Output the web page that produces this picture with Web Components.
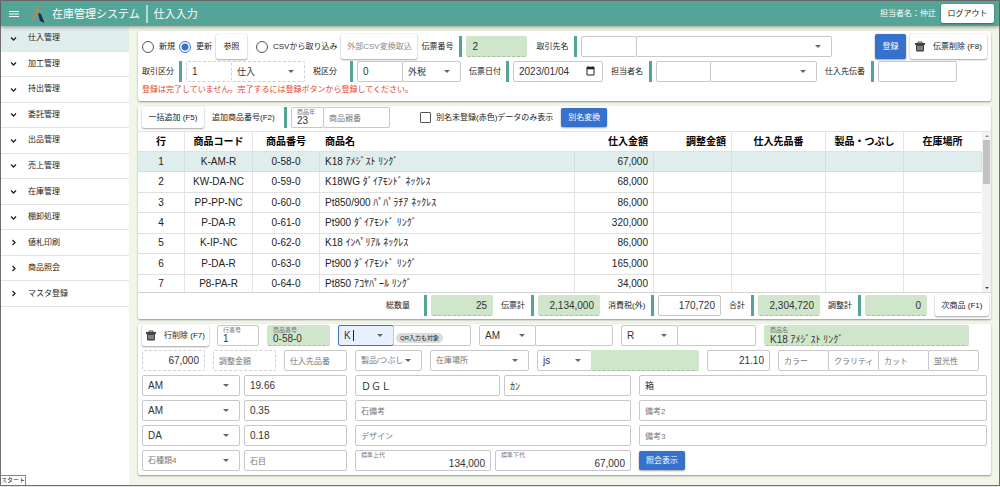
<!DOCTYPE html>
<html lang="ja">
<head>
<meta charset="utf-8">
<title>在庫管理システム | 仕入入力</title>
<style>
  body { margin: 0; background: #e6e6e6; font-family: "Liberation Sans", "Noto Sans CJK JP", sans-serif; font-size: 8px; line-height: 12px; color: #222; }
</style>
</head>
<body>
<stock-app></stock-app>
<script>
const define = (name, render) => customElements.define(name, class extends HTMLElement {
  connectedCallback() {
    if (this.shadowRoot) return;
    this.attachShadow({ mode: 'open' }).innerHTML = render(this);
  }
});
const attr = (el, n) => el.getAttribute(n) || '';

/* Button: plain, primary or muted; an icon may be passed in the slot */
define('ui-button', el => `
<style>
  :host { display: block; flex: none; width: var(--w); }
  button { box-sizing: border-box; width: 100%; height: var(--h, 21px); padding: 0; border: 0; border-radius: 2px; background: #fff; color: #222;
    font: inherit; white-space: nowrap; display: flex; align-items: center; justify-content: center; gap: 8px;
    box-shadow: 0 1px 2px rgba(0,0,0,.35), 0 0 1px rgba(0,0,0,.2); }
  :host([primary]) button { background: #3672cb; color: #fff; }
  :host([muted]) button { color: #888; }
</style>
<button type="button"><slot></slot></button>`);

define('trash-icon', () => `
<style>:host { display: block; width: 10px; height: 11px; } svg { display: block; }</style>
<svg width="10" height="11" viewBox="0 0 10 11" aria-hidden="true"><path d="M3 2V1h4v1" fill="none" stroke="#444"/><path d="M0 2h10v2H0z" fill="#444"/><path d="M1 4h8v5.500q0 1-1 1H2q-1 0-1-1z" fill="#444"/><path d="M3 5v4M5 5v4M7 5v4" stroke="#ddd" stroke-width=".8"/></svg>`);

/* Styles shared by text and drop-down fields */
const fieldCss = `
  :host { display: flex; align-items: center; min-width: 0; flex: 0 1 auto; }
  :host([grow]) { flex: 1 1 0; }
  label { white-space: nowrap; }
  :host([mode="bar"]) label { margin-right: 4px; min-width: var(--lw, 0); }
  .bar { flex: none; width: 3px; height: 21px; background: #54a498; margin-right: 4px; }
  .box { position: relative; box-sizing: border-box; display: flex; flex: 1 1 auto; width: var(--w, 60px); min-width: 0; height: 21px;
    border: 1px solid #c8c8c8; border-radius: 2px; background: #fff; }
  :host([dashed]) .box { border: 1px dashed #d0d0d0; }
  :host([filled]) .box { background: #cfe6cb; border-color: #cfe6cb #cfe6cb #a5bfa2; border-bottom-style: dashed; }
  :host([focused]) .box { background: #e6f1fd; border-color: #3672cb; }
  input, select { box-sizing: border-box; width: 100%; min-width: 0; height: 19px; margin: 0; padding: 0 5px; border: 0; outline: 0; background: none;
    font: inherit; font-size: var(--fs, 10px); color: #333; appearance: none; border-radius: 0; }
  input::placeholder { color: #777; font-size: 8px; opacity: 1; }
  :host([num]) input { text-align: right; }
  :host([mode="float"]) label { position: absolute; left: 5px; top: 0; font-size: 6px; line-height: 8px; color: #777; }
  :host([mode="float"]) input { padding-top: 6px; }
  .arrow { position: absolute; right: 10px; top: 8px; border: solid transparent; border-width: 3px 3px 0; border-top-color: #666; pointer-events: none; }
  .cal { position: absolute; right: 7px; top: 4px; }
  .caret { position: absolute; left: 14px; top: 4px; width: 1px; height: 11px; background: #222; }
  select.short { color: #777; }`;

const frame = (el, control, extra = '') => {
  const label = attr(el, 'label'), mode = attr(el, 'mode');
  const tag = `<label for="c">${label}</label>`;
  return `<style>${fieldCss}</style>
    ${mode === 'bar' ? tag + '<span class="bar"></span>' : ''}
    <div class="box">${mode === 'float' ? tag : ''}${control}${extra}</div>`;
};

define('text-field', el => {
  const mode = attr(el, 'mode'), label = attr(el, 'label');
  return frame(el, `<input id="c" type="text" value="${attr(el, 'value')}" ${!mode && label ? `placeholder="${label}"` : ''} ${mode ? '' : `aria-label="${label || attr(el, 'name')}"`} ${el.hasAttribute('filled') ? 'readonly' : ''}>`,
    (el.hasAttribute('date') ? '<svg class="cal" width="9" height="10" viewBox="0 0 9 10" aria-hidden="true"><path d="M1 2h7v7H1z" fill="none" stroke="#222"/><path d="M1 1h7v2H1zM2 0v2M7 0v2" fill="#222" stroke="#222" stroke-width=".6"/></svg>' : '') +
    (el.hasAttribute('combo') ? '<span class="caret"></span><span class="arrow"></span>' : ''));
});

define('pick-field', el => {
  const v = attr(el, 'value'), label = attr(el, 'label');
  return frame(el, `<select id="c" class="${v ? '' : 'short'}" aria-label="${label || attr(el, 'name')}"><option>${v || label}</option></select>`, '<span class="arrow"></span>');
});

/* Radio button or tick box with its label */
define('choice-item', el => {
  const type = attr(el, 'type');
  return `<style>
    :host { display: block; flex: none; }
    label { display: flex; align-items: center; gap: 5px; white-space: nowrap; }
    input { appearance: none; box-sizing: border-box; width: 11px; height: 11px; margin: 0; border: 1px solid #555; background: #fff; border-radius: 1px; }
    input[type=radio] { width: 12px; height: 12px; border-radius: 50%; }
    input[type=radio]:checked { border-color: #3672cb; background: radial-gradient(#3672cb 0 3px, #fff 4px); }
  </style><label><input type="${type}" ${el.hasAttribute('checked') ? 'checked' : ''}><slot></slot></label>`;
});

define('panel-card', () => `
<style>:host { display: block; background: #fff; border-radius: 2px; box-shadow: 0 1px 2px rgba(0,0,0,.4); }</style><slot></slot>`);

define('app-header', () => `
<style>
  :host { display: flex; align-items: center; box-sizing: border-box; height: 25px; padding: 0 5px 0 8px; background: #54a498; color: #fff;
    box-shadow: 0 1px 4px rgba(0,0,0,.4); position: relative; z-index: 1; }
  .menu { border: 0; background: none; padding: 0; width: 10px; height: 10px; display: flex; }
  .logo { margin: 0 7px 0 12px; }
  h1, h2 { margin: 0; font-size: 11px; line-height: 18px; font-weight: 400; white-space: nowrap; }
  h1 { padding-right: 6px; border-right: 2px solid #b5dad4; }
  h2 { padding-left: 6px; }
  .user { margin-left: auto; margin-right: 5px; }
</style>
<button class="menu" type="button" aria-label="メニュー"><svg width="10" height="10" viewBox="0 0 10 10"><path d="M0 2.500h10M0 5h10M0 7.500h10" stroke="#fff"/></svg></button>
<svg class="logo" width="14" height="18" viewBox="0 0 14 18" aria-hidden="true"><path d="M8 0v6L4 13l-4 3z" fill="#b98a56"/><path d="M7 8l3 1 3.500 9L9 16z" fill="#1d2c4d"/></svg>
<h1>在庫管理システム</h1><h2>仕入入力</h2>
<span class="user">担当者名：仲辻</span>
<ui-button style="--w:53px;--h:19px">ログアウト</ui-button>`);

define('side-nav', () => `
<style>
  :host { display: block; width: 128px; flex: none; background: #fff; }
  ul { list-style: none; margin: 0; padding: 0; height: 281px; display: grid; grid-auto-rows: 1fr; }
  li { border-bottom: 1px solid #e4e4e4; }
  li.on { background: #dfeeed; }
  a { display: flex; align-items: center; height: 100%; padding-left: 9px; gap: 11px; color: #222; text-decoration: none; }
</style>
<nav><ul>${['仕入管理', '加工管理', '持出管理', '委託管理', '出品管理', '売上管理', '在庫管理', '棚卸処理', '値札印刷', '商品照会', 'マスタ登録'].map((t, i) =>
  `<li class="${i ? '' : 'on'}"><a href="#"><svg width="7" height="7" viewBox="0 0 7 7" aria-hidden="true"><path d="${i < 8 ? 'M1 2.500L3.500 5 6 2.500' : 'M2.500 1L5 3.500 2.500 6'}" fill="none" stroke="#222" stroke-width="1.300"/></svg>${t}</a></li>`).join('')}</ul></nav>`);

const rows = [
  ['K-AM-R', '0-58-0', 'K18 ｱﾒｼﾞｽﾄ ﾘﾝｸﾞ', '67,000'],
  ['KW-DA-NC', '0-59-0', 'K18WG ﾀﾞｲｱﾓﾝﾄﾞ ﾈｯｸﾚｽ', '68,000'],
  ['PP-PP-NC', '0-60-0', 'Pt850/900 ﾊﾟﾊﾟﾗﾁｱ ﾈｯｸﾚｽ', '86,000'],
  ['P-DA-R', '0-61-0', 'Pt900 ﾀﾞｲｱﾓﾝﾄﾞ ﾘﾝｸﾞ', '320,000'],
  ['K-IP-NC', '0-62-0', 'K18 ｲﾝﾍﾟﾘｱﾙ ﾈｯｸﾚｽ', '86,000'],
  ['P-DA-R', '0-63-0', 'Pt900 ﾀﾞｲｱﾓﾝﾄﾞ ﾘﾝｸﾞ', '165,000'],
  ['P8-PA-R', '0-64-0', 'Pt850 ｱｺﾔﾊﾟｰﾙ ﾘﾝｸﾞ', '34,000']
];
define('item-table', () => `
<style>
  :host { display: flex; box-sizing: border-box; height: 162px; overflow: hidden; border-top: 1px solid #e4e4e4; border-bottom: 1px solid #d4d4d4; }
  table { flex: 1; min-width: 0; width: 100%; height: 163px; table-layout: fixed; border-collapse: separate; border-spacing: 0; font-size: 10px; line-height: 14px; }
  th, td { padding: 0 5px; text-align: center; white-space: nowrap; border-bottom: 1px solid #e0e0e0; border-right: 1px solid #e4e4e4; }
  th:nth-child(n+3):nth-child(-n+5), th:last-child, td:last-child { border-right-color: transparent; }
  th { height: 20px; box-sizing: border-box; color: #000; }
  .l { text-align: left; } .r { text-align: right; }
  tr.on td { background: #dfeeed; border-color: #cfe0de; }
  .scroll { width: 9px; flex: none; background: #f2f2f2; display: flex; flex-direction: column; align-items: center; padding: 3px 0; box-sizing: border-box; }
  .scroll i { border: solid transparent; border-width: 0 2px 2px; border-bottom-color: #888; }
  .scroll i:last-child { border-width: 2px 2px 0; border-top-color: #444; }
  .scroll b { width: 7px; height: 44px; background: #c1c1c1; margin: 3px 0 auto; }
</style>
<table>
  <colgroup><col style="width:47px"><col style="width:68px"><col style="width:67px"><col><col style="width:79px"><col style="width:78px"><col style="width:94px"><col style="width:78px"><col style="width:78px"></colgroup>
  <thead><tr><th>行</th><th>商品コード</th><th>商品番号</th><th class="l">商品名</th><th class="r">仕入金額</th><th class="r">調整金額</th><th>仕入先品番</th><th>製品・つぶし</th><th>在庫場所</th></tr></thead>
  <tbody>${rows.map((r, i) => `<tr class="${i ? '' : 'on'}"><td>${i + 1}</td><td>${r[0]}</td><td>${r[1]}</td><td class="l">${r[2]}</td><td class="r">${r[3]}</td><td></td><td></td><td></td><td></td></tr>`).join('')}</tbody>
</table>
<div class="scroll"><i></i><b></b><i></i></div>`);

/* Year and parent number of the item to add, under one barred heading */
define('item-number', () => `
<style>
  :host { display: flex; align-items: center; }
  .name { white-space: nowrap; width: 68px; margin-right: 4px; }
  .bar { width: 3px; height: 21px; background: #54a498; margin-right: 4px; }
  text-field + text-field { margin-left: -1px; }
</style>
<span class="name">追加商品番号(F2)</span><span class="bar"></span>
<text-field mode="float" label="商品年" value="23" style="--w:33px"></text-field><text-field label="商品親番" style="--w:67px"></text-field>`);

define('stock-app', () => `
<style>
  :host { display: flex; flex-direction: column; box-sizing: border-box; min-height: calc(100vh - 1px); border: 1px solid #707070; position: relative; background: #fff; }
  .body { display: flex; flex: 1; }
  main { flex: 1; min-width: 0; box-sizing: border-box; padding: 5px 8px 10px 9px; background: #f0f6e8; display: flex; flex-direction: column; gap: 5px; }
  .row, .join { display: flex; align-items: center; min-width: 0; }
  .row { gap: 8px; }
  .join > * + * { margin-left: -1px; }
  .entry { padding: 3px 4px 5px; }
  .entry .row:first-child { height: 25px; gap: 4px; }
  .entry .row + .row { margin-top: 2px; }
  .tools { padding: 1px 4px 3px; }
  .tools choice-item { margin-left: 22px; }
  .sum { justify-content: flex-end; padding: 2px 2px 3px; }
  .end { margin-left: auto; }
  .gap { margin-left: 5px; }
  .msg { margin: 2px 0 0; color: #e0452f; }
  .detail { padding: 1px 4px 4px; display: grid; gap: 4px; }
  .trio { display: grid; grid-template-columns: 205fr 276fr 348fr; gap: 8px; }
  .trio > div { display: flex; gap: 4px; min-width: 0; align-items: center; }
  .trio > .pair { display: grid; grid-template-columns: 98fr 103fr; }
  .chipbox { position: relative; display: flex; }
  .chip { position: absolute; left: 3px; top: 8px; height: 10px; line-height: 10px; padding: 0 4px; border-radius: 5px; background: #dcdcdc; font-size: 6px; white-space: nowrap; }
  .start { position: absolute; left: 0; bottom: 0; height: 9px; line-height: 9px; border: solid #888; border-width: 1px 1px 0 0; background: #fff; font-size: 6px; }
</style>
<app-header></app-header>
<div class="body">
<side-nav></side-nav>
<main>
  <panel-card><div class="entry">
    <div class="row">
      <choice-item type="radio">新規</choice-item>
      <choice-item type="radio" checked>更新</choice-item>
      <ui-button style="--w:31px;--h:25px">参照</ui-button>
      <choice-item class="gap" type="radio">CSVから取り込み</choice-item>
      <ui-button muted style="--w:76px;--h:25px">外部CSV変換取込</ui-button>
      <text-field mode="bar" label="伝票番号" value="2" filled style="--w:61px;--lw:34px"></text-field>
      <div class="join gap"><text-field mode="bar" label="取引先名" style="--w:56px;--lw:34px"></text-field><pick-field name="取引先名" value=" " style="--w:196px"></pick-field></div>
      <ui-button class="end" primary style="--w:31px;--h:25px">登録</ui-button>
      <ui-button style="--w:77px;--h:25px"><trash-icon></trash-icon>伝票削除 (F8)</ui-button>
    </div>
    <div class="row">
      <div class="join"><text-field mode="bar" label="取引区分" value="1" dashed style="--w:46px;--lw:33px"></text-field><pick-field name="取引区分名" value="仕入" dashed style="--w:74px;--fs:9px"></pick-field></div>
      <div class="join"><text-field mode="bar" label="税区分" value="0" style="--w:46px;--lw:33px"></text-field><pick-field name="税区分名" value="外税" style="--w:59px;--fs:9px"></pick-field></div>
      <text-field mode="bar" label="伝票日付" value="2023/01/04" date style="--w:90px;--lw:33px"></text-field>
      <div class="join"><text-field mode="bar" label="担当者名" style="--w:55px;--lw:34px"></text-field><pick-field name="担当者名" value=" " style="--w:107px"></pick-field></div>
      <text-field mode="bar" label="仕入先伝番" style="--w:79px;--lw:42px"></text-field>
    </div>
    <p class="msg">登録は完了していません。完了するには登録ボタンから登録してください。</p>
  </div></panel-card>

  <panel-card>
    <div class="row tools">
      <ui-button style="--w:62px">一括追加 (F5)</ui-button>
      <item-number></item-number>
      <choice-item type="checkbox">別名未登録(赤色)データのみ表示</choice-item>
      <ui-button primary style="--w:46px;--h:19px">別名変換</ui-button>
    </div>
    <item-table></item-table>
    <div class="row sum">
      <text-field mode="bar" label="総数量" value="25" filled num style="--w:62px;--lw:34px"></text-field>
      <text-field mode="bar" label="伝票計" value="2,134,000" filled num style="--w:62px;--lw:26px"></text-field>
      <text-field mode="bar" label="消費税(外)" value="170,720" num style="--w:63px;--lw:39px"></text-field>
      <text-field mode="bar" label="合計" value="2,304,720" filled num style="--w:62px;--lw:18px"></text-field>
      <text-field mode="bar" label="調整計" value="0" filled num style="--w:62px;--lw:26px"></text-field>
      <ui-button style="--w:54px">次商品 (F1)</ui-button>
    </div>
  </panel-card>

  <panel-card><div class="detail">
    <div class="row">
      <ui-button style="--w:67px"><trash-icon></trash-icon>行削除 (F7)</ui-button>
      <text-field mode="float" label="行番号" value="1" style="--w:42px"></text-field>
      <text-field mode="float" label="商品番号" value="0-58-0" filled style="--w:63px"></text-field>
      <div class="join"><text-field name="地金" value="K" combo focused style="--w:56px"></text-field><div class="chipbox"><text-field name="QR入力" style="--w:78px"></text-field><span class="chip">QR入力も対象</span></div></div>
      <div class="join"><pick-field name="石" value="AM" style="--w:57px"></pick-field><text-field name="石名" style="--w:78px"></text-field></div>
      <div class="join"><pick-field name="品種" value="R" style="--w:57px"></pick-field><text-field name="品種名" style="--w:79px"></text-field></div>
      <text-field mode="float" label="商品名" value="K18 ｱﾒｼﾞｽﾄ ﾘﾝｸﾞ" filled style="--w:205px"></text-field>
    </div>
    <div class="row">
      <text-field name="仕入金額" value="67,000" dashed num style="--w:63px"></text-field>
      <text-field label="調整金額" dashed style="--w:63px"></text-field>
      <text-field label="仕入先品番" style="--w:63px"></text-field>
      <pick-field label="製品/つぶし" style="--w:67px;--fs:8px"></pick-field>
      <pick-field label="在庫場所" style="--w:99px;--fs:8px"></pick-field>
      <div class="join"><pick-field name="区分" value="js" style="--w:55px"></pick-field><text-field name="区分名" filled style="--w:108px"></text-field></div>
      <text-field name="重量" value="21.10" num style="--w:63px"></text-field>
      <div class="join"><text-field label="カラー" style="--w:51px"></text-field><text-field label="クラリティ" style="--w:51px"></text-field><text-field label="カット" style="--w:51px"></text-field><text-field label="蛍光性" style="--w:51px"></text-field></div>
    </div>
    <div class="trio">
      <div class="pair"><pick-field name="石種類1" value="AM"></pick-field><text-field name="石目1" value="19.66"></text-field></div>
      <div><text-field grow name="石備考1" value="ＤＧＬ" style="flex-grow:145"></text-field><text-field grow name="部品" value="ｶﾝ" style="flex-grow:127"></text-field></div>
      <div><text-field grow name="備考1" value="箱" style="--fs:9px"></text-field></div>
    </div>
    <div class="trio">
      <div class="pair"><pick-field name="石種類2" value="AM"></pick-field><text-field name="石目2" value="0.35"></text-field></div>
      <div><text-field grow label="石備考"></text-field></div>
      <div><text-field grow label="備考2"></text-field></div>
    </div>
    <div class="trio">
      <div class="pair"><pick-field name="石種類3" value="DA"></pick-field><text-field name="石目3" value="0.18"></text-field></div>
      <div><text-field grow label="デザイン"></text-field></div>
      <div><text-field grow label="備考3"></text-field></div>
    </div>
    <div class="trio">
      <div class="pair"><pick-field label="石種類4" style="--fs:8px"></pick-field><text-field label="石目"></text-field></div>
      <div><text-field grow mode="float" label="標準上代" value="134,000" num></text-field><text-field grow mode="float" label="標準下代" value="67,000" num></text-field></div>
      <div><ui-button primary style="--w:46px;--h:19px">照会表示</ui-button></div>
    </div>
  </div></panel-card>
</main>
</div>
<span class="start">スタート</span>`);
</script>
</body>
</html>
